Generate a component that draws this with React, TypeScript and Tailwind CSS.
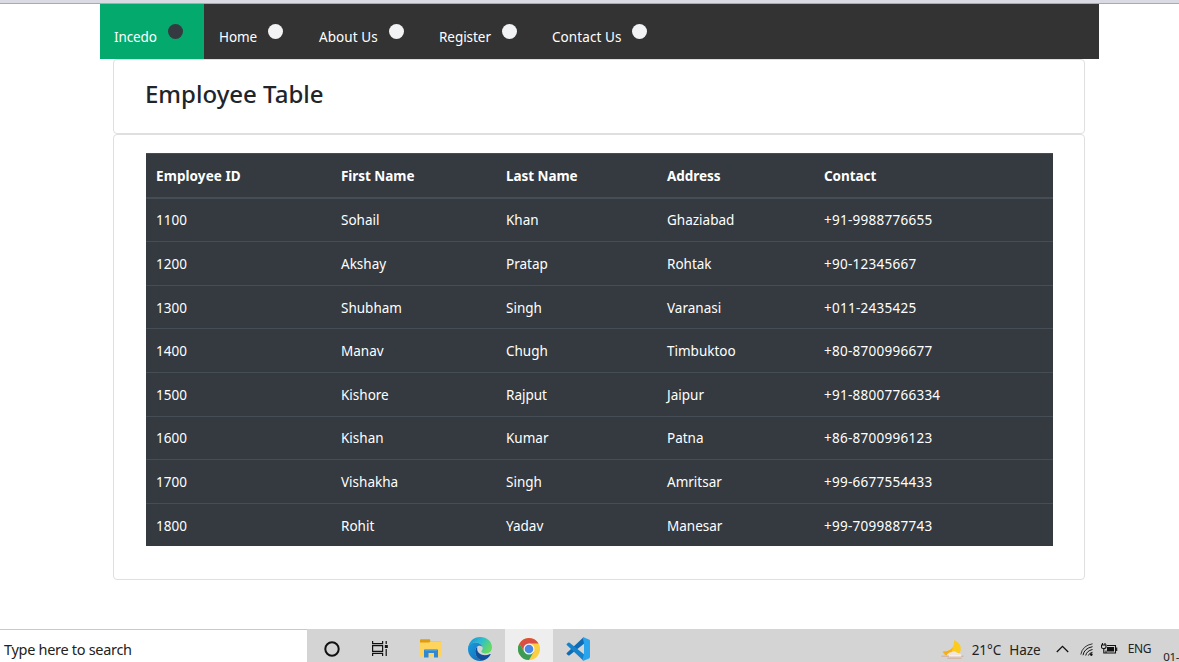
import React from "react";

const links = [
  { label: "Incedo", width: "w-[104px] pl-[14px] pr-[21px]", tracking: "tracking-[-0.1px]", active: true },
  { label: "Home", width: "w-[101px] pl-[15px] pr-[22px]", tracking: "tracking-[-0.1px]" },
  { label: "About Us", width: "w-[120px] pl-[14px] pr-[21px]", tracking: "tracking-[0.08px]" },
  { label: "Register", width: "w-[113px] pl-[14px] pr-[21px]", tracking: "tracking-[-0.05px]" },
  { label: "Contact Us", width: "w-[130px] pl-[14px] pr-[21px]", tracking: "tracking-[0.08px]" },
];

const columns = ["Employee ID", "First Name", "Last Name", "Address", "Contact"];

const employees = [
  { height: "h-[42px]", cells: ["1100", "Sohail", "Khan", "Ghaziabad", "+91-9988776655"] },
  { height: "h-[44px] border-t", cells: ["1200", "Akshay", "Pratap", "Rohtak", "+90-12345667"] },
  { height: "h-[43px] border-t pt-px", cells: ["1300", "Shubham", "Singh", "Varanasi", "+011-2435425"] },
  { height: "h-[44px] border-t", cells: ["1400", "Manav", "Chugh", "Timbuktoo", "+80-8700996677"] },
  { height: "h-[44px] border-t", cells: ["1500", "Kishore", "Rajput", "Jaipur", "+91-88007766334"] },
  { height: "h-[43px] border-t", cells: ["1600", "Kishan", "Kumar", "Patna", "+86-8700996123"] },
  { height: "h-[44px] border-t", cells: ["1700", "Vishakha", "Singh", "Amritsar", "+99-6677554433"] },
  { height: "h-[43px] border-t pt-px", cells: ["1800", "Rohit", "Yadav", "Manesar", "+99-7099887743"] },
];

const rowGrid =
  "grid grid-cols-[185px_165px_161px_157px_239px] items-center border-[#454d55]";

function NavBar() {
  return (
    <nav className="ml-[100px] flex h-[55px] w-[999px] bg-[#333333]">
      {links.map((link) => (
        <a
          key={link.label}
          className={`flex h-full shrink-0 justify-between text-[13.5px] text-white ${link.width} ${link.active ? "bg-[#04aa6d]" : ""}`}
        >
          <span className={`mt-[23px] whitespace-nowrap leading-[20px] ${link.tracking}`}>{link.label}</span>
          <span className={`mt-[20px] size-[15px] shrink-0 rounded-full ${link.active ? "bg-[#343a40]" : "bg-[#f2f3f5]"}`} />
        </a>
      ))}
    </nav>
  );
}

function EmployeeTable() {
  return (
    <div role="table" className="w-[907px] bg-[#343a40] text-[13.5px] text-white">
      <div role="row" className={`${rowGrid} h-[46px] border-t border-b-2 font-bold`}>
        {columns.map((c, i) => (
          <span role="columnheader" key={c} className={`pl-[10px] leading-[20px] ${i === 0 ? "tracking-[0.08px]" : "tracking-[-0.05px]"}`}>{c}</span>
        ))}
      </div>
      {employees.map((e) => (
        <div role="row" key={e.cells[0]} className={`${rowGrid} ${e.height}`}>
          {e.cells.map((c, i) => (
            <span role="cell" key={i} className={`pl-[10px] leading-[20px] ${i === 4 ? "tracking-[0.26px]" : ""}`}>{c}</span>
          ))}
        </div>
      ))}
    </div>
  );
}

function TaskViewIcon() {
  return (
    <svg width="18" height="17" viewBox="0 0 18 17" fill="none" stroke="#111" strokeWidth="1.2">
      <path d="M1.6 1v2.6h10V1M1.6 16v-2.6h10V16M1.6 5.6h10v5.8h-10zM15.2 1v3M15.2 9v7" />
      <path d="M13.8 5h3v3h-3z" fill="#111" stroke="none" />
    </svg>
  );
}

function FolderIcon() {
  return (
    <svg width="22" height="19" viewBox="0 0 22 19">
      <path d="M0 1.2Q0 .2 1 .2h8.300q1 0 1 1v1H21V6H0z" fill="#dc9d10" />
      <path d="M0 3.400h9.200l1.300-1.200H21Q22 2.200 22 3.200V17.500H0z" fill="#ffd45c" />
      <path d="M4 18.500v-7Q4 10 5.500 10h11Q18 10 18 11.500v7h-4V14H8.500v4.500z" fill="#3287cf" />
      <path d="M5 10h12v1.500H5z" fill="#59b1ed" />
    </svg>
  );
}

function EdgeIcon() {
  return (
    <svg width="24" height="24" viewBox="0 0 24 24">
      <defs>
        <linearGradient id="edgeTop" x1="0" y1="0" x2="1" y2=".5">
          <stop offset="0" stopColor="#1689d0" />
          <stop offset=".5" stopColor="#2bbbd4" />
          <stop offset="1" stopColor="#65da62" />
        </linearGradient>
        <linearGradient id="edgeBase" x1="0" y1="0" x2="1" y2="1">
          <stop offset="0" stopColor="#1b9bdd" />
          <stop offset="1" stopColor="#1269b6" />
        </linearGradient>
      </defs>
      <path d="M.2 11C.8 4.5 5.8 0 12 0c7 0 12 4.8 12 10.2 0 3.8-2.8 6.2-6.2 6.2-2.7 0-4.4-.9-4.4-1.9 0-.8 1.3-1.4 1.3-3.4 0-3-3.1-5.5-7-5.5C4.300 5.600 1.600 7.500.2 11z" fill="url(#edgeTop)" />
      <path d="M0 12c0-3.800 3.400-6.400 7.500-6.400 4 0 7.200 2.500 7.200 5.500 0-1.500-1.500-2.300-3-2.300-2.500 0-4.500 2.600-4.500 5.600 0 5 3.600 8.800 8 9.100-1 .3-2 .5-3.200.5C5.400 24 0 18.700 0 12z" fill="url(#edgeBase)" />
      <path d="M9.200 10.100C7.800 11.100 7.200 12.800 7.200 14.400c0 5 3.700 9 8 9.100 3.300-.9 5.900-3.200 7.400-5.900.3-.6-.1-.9-.6-.6-5.600 2.700-12.400.6-12.800-4.400z" fill="#104f9c" />
    </svg>
  );
}

function ChromeIcon() {
  return (
    <svg width="22" height="22" viewBox="0 0 22 22">
      <circle cx="11" cy="11" r="11" fill="#fbcf42" />
      <path d="M1.470 5.500A11 11 0 0 1 20.530 5.500H11L6.240 13.750z" fill="#d94f43" />
      <path d="M1.470 5.500A11 11 0 0 0 11 22L15.760 13.750H6.240z" fill="#3c9c56" />
      <circle cx="11" cy="11" r="5.500" fill="#f5f5f5" />
      <circle cx="11" cy="11" r="4.300" fill="#4a86e8" />
    </svg>
  );
}

function CodeIcon() {
  return (
    <svg width="24" height="24" viewBox="0 0 24 24">
      <path d="M1 15.800 17.500.3 18 6.800 3.600 18.300Q2.800 18.800 2.100 18.200L.7 17Q.2 16.400 1 15.800z" fill="#0f6cb4" />
      <path d="M1 8.200 17.500 23.700 18 17.200 3.600 5.700Q2.800 5.200 2.100 5.800L.7 7Q.2 7.600 1 8.200z" fill="#1583cc" />
      <path d="M17.500.3 23 2.600Q24 3 24 4v16q0 1-1 1.400l-5.500 2.300Q17 23.800 16.700 23.400L18 22V2L16.700.6Q17 .2 17.500.3z" fill="#2ba4ee" />
    </svg>
  );
}

function HazeIcon() {
  return (
    <svg width="24" height="20" viewBox="0 0 24 20">
      <path d="M13 .3C20 2.500 21.800 10 17.500 15.500H6C3.500 15 2 13.500 1.500 11.500 8 12 14 8 13 .3z" fill="#fccb1e" />
      <path d="M1.500 11.500C6 12 10 10 12 7.500L9 15.500H5z" fill="#f7ae16" />
      <path d="M5.500 16Q7 12 10.500 12.300q3-2.300 6 .7 3.700-.2 4.500 3z" fill="#efe5df" />
      <path d="M1 16.300h21M7 18.300h13" stroke="#d3b9ab" strokeWidth="1.600" strokeLinecap="round" />
      <path d="M8 15.800h12" stroke="#f5efeb" strokeWidth="1.600" />
    </svg>
  );
}

function WifiIcon() {
  return (
    <svg width="13" height="13" viewBox="0 0 13 13" fill="none" stroke="#111" strokeWidth="1">
      <path d="M.8 11.500Q2.500 2.500 12.500.8" stroke="#333" />
      <path d="M3 12.200Q4.200 5.300 12.500 3.700M5.700 12.500Q6.700 7.800 12.500 6.500M8.400 12.500Q9.200 10 12.500 9.300" />
      <circle cx="11.300" cy="11.600" r="1.300" fill="#111" stroke="none" />
    </svg>
  );
}

function BatteryIcon() {
  return (
    <svg width="17" height="13" viewBox="0 0 17 13" fill="none" stroke="#111" strokeWidth="1.100">
      <path d="M6 2.500h8.500v7.500H5V7.500M15.700 4.500v3.500M1.500 0v2M4 0v2M.5 2h4.500v2Q5 5.500 2.800 5.500 .5 5.500 .5 4zM2.800 5.500V10H5" />
      <path d="M6 4h7v4.500H6z" fill="#111" stroke="none" />
    </svg>
  );
}

function Taskbar() {
  return (
    <footer className="flex h-[33px] shrink-0 bg-[#d4d4d4] text-[#222222]">
      <div className="w-[307px] shrink-0 border-t border-[#c8c8c8] bg-white pl-[4px] pt-[8px] text-[14.5px] leading-[22px] tracking-[-0.3px]">
        Type here to search
      </div>
      <div className="flex w-[198px] shrink-0">
        <div className="w-[64px] pl-[17px] pt-[12px]">
          <svg width="16" height="16" viewBox="0 0 16 16">
            <circle cx="8" cy="8" r="6.700" fill="none" stroke="#111" strokeWidth="2" />
          </svg>
        </div>
        <div className="w-[49px] pt-[11px]"><TaskViewIcon /></div>
        <div className="w-[48px] pt-[10px]"><FolderIcon /></div>
        <div className="pt-[8px]"><EdgeIcon /></div>
      </div>
      <div className="flex w-[48px] shrink-0 justify-center bg-[#eeeeee] pt-[9px]"><ChromeIcon /></div>
      <div className="w-[388px] shrink-0 pl-[13px] pt-[8px]"><CodeIcon /></div>
      <div className="flex w-[238px] shrink-0 whitespace-nowrap text-[13.5px]">
        <div className="w-[31px] pt-[11px]"><HazeIcon /></div>
        <span className="w-[38px] pt-[11px] leading-[20px]">21°C</span>
        <span className="w-[47px] pt-[11px] leading-[20px]">Haze</span>
        <div className="w-[25px] pt-[16px]">
          <svg width="13" height="8" viewBox="0 0 13 8"><path d="M.8 7 6.500 1.300 12.200 7" fill="none" stroke="#111" strokeWidth="1.300" /></svg>
        </div>
        <div className="w-[21px] pt-[14px]"><WifiIcon /></div>
        <div className="w-[27px] pt-[14px]"><BatteryIcon /></div>
        <span className="w-[36px] pt-[12px] text-[12px] leading-[16px] tracking-[-0.4px]">ENG</span>
        <span className="pt-[20px] text-[11.5px] leading-[16px] tracking-[-0.4px]">01-</span>
      </div>
    </footer>
  );
}

export default function App() {
  return (
    <div className="flex h-[662px] w-[1179px] flex-col overflow-hidden bg-white font-['Noto_Sans','Open_Sans',sans-serif]">
      <div className="h-[4px] shrink-0 border-b border-[#aaaaae] bg-[#dadae2]" />
      <main className="h-[625px] shrink-0">
        <NavBar />
        <section className="ml-[113px] h-[75px] w-[972px] rounded-[4px] border border-[#dfdfdf] pl-[31px] pt-[19px]">
          <h1 className="text-[24px] font-medium leading-[30px] text-[#212529]">Employee Table</h1>
        </section>
        <section className="ml-[113px] h-[446px] w-[972px] rounded-[4px] border border-[#dfdfdf] pl-[32px] pt-[18px]">
          <EmployeeTable />
        </section>
      </main>
      <Taskbar />
    </div>
  );
}
